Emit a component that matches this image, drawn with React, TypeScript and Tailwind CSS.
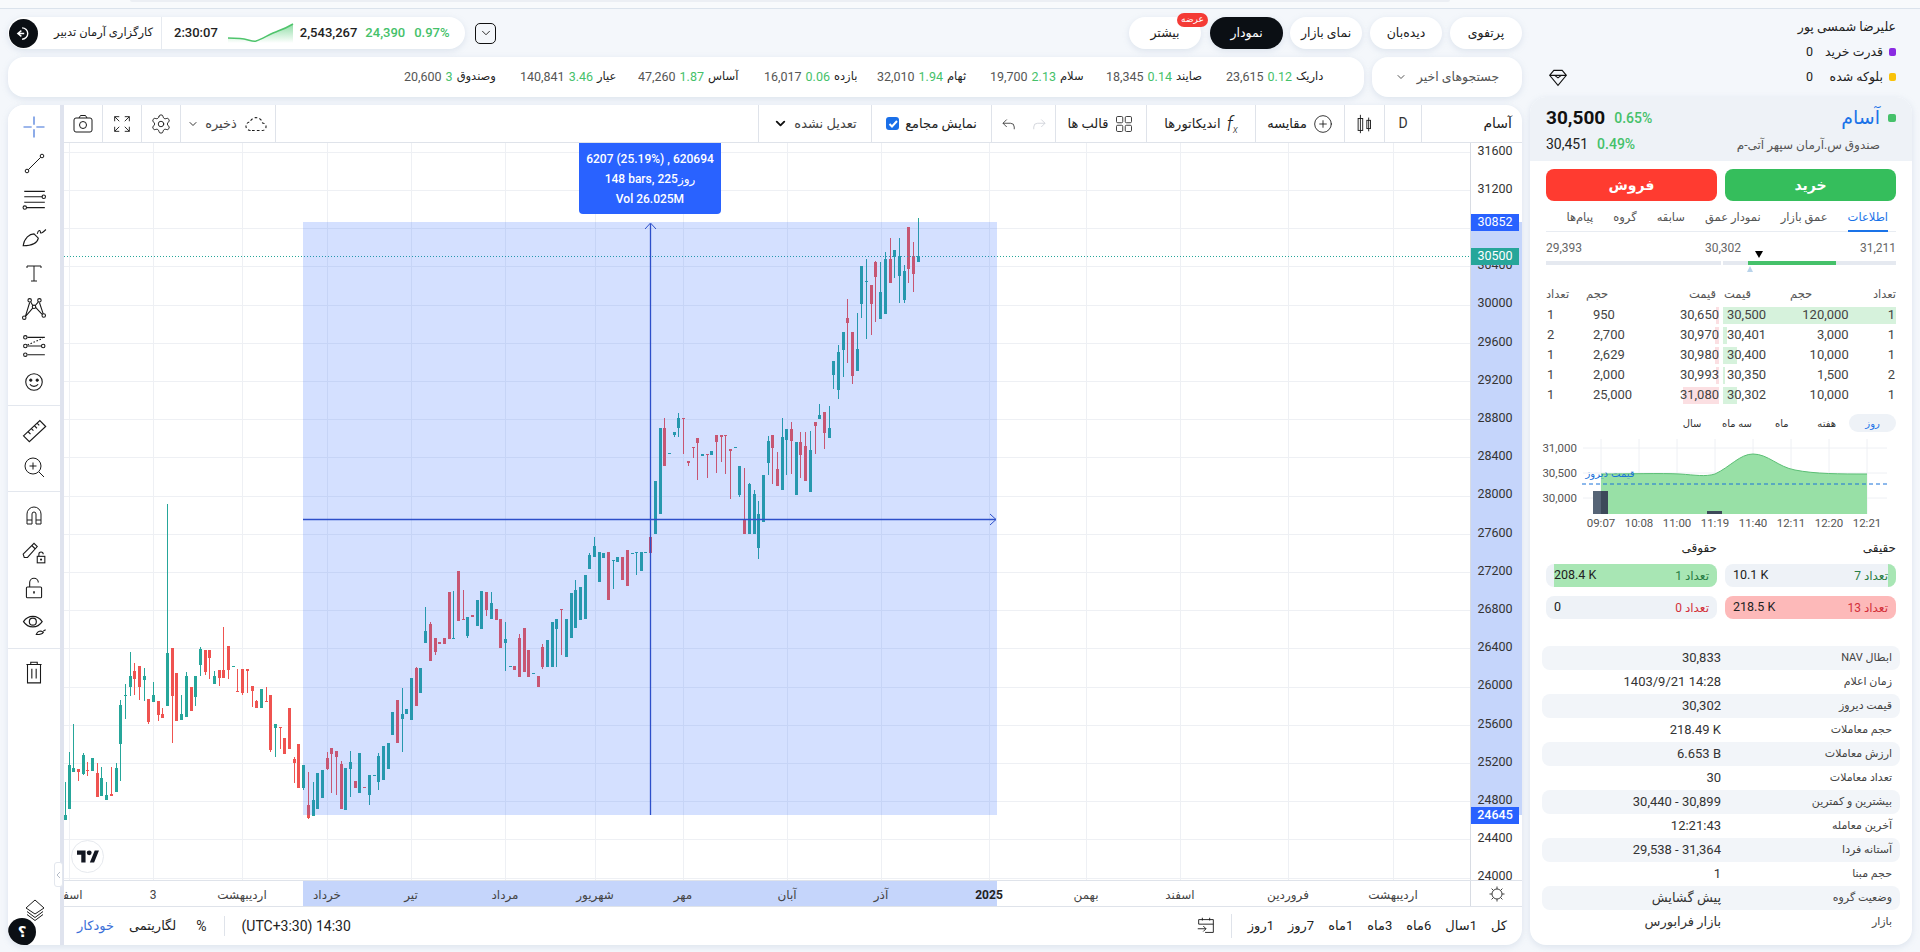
import React from "react";
import { ChevronDown, Settings, CirclePlus } from "lucide-react";

type C = [number, number, number, number, number, number];
const z12: C[] = [[45,1005,1020,905,1020,1],[58,855,987,815,987,1],[70,865,875,733,875,1],[85,868,876,868,903,0],[100,825,882,820,885,1],[112,870,873,846,888,0],[127,835,872,835,872,1],[142,880,950,848,950,0],[154,895,947,862,947,1],[169,945,960,905,960,1],[184,943,947,862,947,0],[199,865,936,850,936,1],[211,675,792,660,902,1],[226,646,648,612,716,1],[241,588,620,516,648,1],[253,573,597,550,645,0],[268,558,620,558,660,0],[283,588,600,565,662,1],[295,657,726,657,732,0],[310,645,665,606,665,1],[325,663,705,663,722,0],[337,702,714,684,714,0],[352,520,678,72,678,1],[367,504,648,504,788,0],[379,580,722,580,722,0],[394,703,720,645,720,1],[409,588,710,575,710,1],[424,620,692,620,692,0],[436,588,650,588,678,1],[451,507,556,502,588,1],[466,510,575,510,585,0],[478,510,533,510,596,0],[493,588,612,573,612,1],[508,570,594,570,618,0],[520,570,594,441,594,0],[535,498,570,498,597,0],[550,558,560,558,560,1],[562,633,636,567,636,0],[577,567,640,567,644,0],[592,568,572,568,638,0],[607,618,633,618,682,0],[619,663,684,660,684,0],[634,627,684,627,684,1],[649,663,665,621,665,0],[661,645,810,645,816,0],[676,733,744,733,831,1],[691,741,743,741,807,0],[703,774,822,774,822,0],[718,684,806,684,806,0],[733,837,849,831,909,0],[745,792,924,792,924,0],[760,855,924,855,930,1],[775,975,1014,876,1017,0],[790,960,1008,905,1008,1],[802,880,987,880,987,1],[817,870,954,870,954,1],[832,834,867,816,870,0],[844,804,822,804,939,0],[859,813,831,813,945,0],[874,852,987,843,987,0],[886,864,990,864,990,1]];
const z10: C[] = [[151,1027,1047,993,1131,1],[166,1083,1104,1083,1104,0],[178,999,1119,999,1119,1],[193,1101,1104,1101,1104,0],[208,1065,1125,1065,1155,1],[223,1065,1068,1065,1068,1],[235,1007,1086,1000,1110,1],[250,978,1080,978,1080,1],[265,969,1047,969,1047,1],[277,876,945,876,945,1],[292,840,970,840,970,0],[307,882,897,804,995,1],[319,867,882,867,882,1],[334,775,900,775,900,1],[349,745,858,740,858,0],[361,744,820,744,820,1],[376,633,669,560,669,1],[391,612,723,605,723,0],[406,654,696,654,705,0],[418,667,671,667,671,0],[433,654,672,654,672,0],[448,516,657,516,657,0],[460,653,657,513,657,1],[475,453,603,453,603,0],[490,598,600,510,600,0],[502,591,648,591,654,1],[517,586,590,586,590,0],[532,540,618,540,618,1],[544,513,627,513,627,1],[559,516,570,516,588,0],[574,549,597,516,597,1],[589,567,600,567,600,0],[601,597,684,597,684,0],[616,657,669,606,753,1],[631,738,740,738,740,1],[643,738,750,738,750,0],[658,654,771,642,771,0],[673,624,756,624,756,0],[685,690,771,690,771,0],[700,759,762,759,762,1],[715,768,801,768,801,0],[727,681,741,672,747,0],[742,660,741,660,741,1],[757,606,741,606,741,1],[769,597,627,597,741,1],[784,566,570,566,705,0],[799,597,711,597,711,1],[814,519,654,519,654,1],[826,510,624,480,624,1],[841,501,600,501,600,1],[856,465,597,465,597,1],[868,405,447,400,447,1],[883,378,412,351,412,1],[898,396,486,396,486,1],[910,400,414,400,414,1],[925,396,540,396,540,0],[940,420,423,420,507,1],[952,411,426,411,426,1],[967,411,480,411,480,0],[982,390,498,390,498,0],[997,398,401,398,401,1],[1009,396,399,396,465,1],[1024,396,453,396,453,1],[1036,397,399,397,399,1]];
const z11: C[] = [[31,411,459,411,459,0],[46,243,402,243,402,1],[61,84,342,84,342,1],[73,84,198,54,198,0],[88,159,161,159,161,1],[103,96,105,96,111,1],[115,54,84,39,111,1],[130,53,56,53,162,0],[145,183,189,183,198,0],[160,141,144,141,174,0],[172,114,129,114,240,0],[187,163,167,163,167,1],[202,162,165,162,234,0],[214,153,165,153,165,1],[229,105,126,105,219,0],[244,105,111,105,186,0],[256,105,108,105,222,0],[271,148,153,148,297,0],[286,141,143,141,143,1],[298,198,285,198,291,1],[313,357,402,204,402,0],[328,252,402,249,402,1],[343,282,402,270,402,1],[355,342,444,303,477,1],[370,225,366,225,366,1],[385,123,189,108,225,1],[397,105,144,105,252,0],[412,207,258,156,258,0],[427,111,270,54,270,1],[439,87,120,87,225,1],[454,87,123,66,222,0],[469,126,285,126,285,1],[481,126,165,96,234,0],[496,138,243,96,243,0],[511,150,276,93,276,1],[526,66,78,66,162,0],[538,45,57,12,57,1],[553,36,99,36,147,0],[568,84,114,18,114,1]];
const z8: C[] = [[580,723,765,723,807,1],[595,696,810,675,837,1],[610,636,690,636,771,1],[622,594,609,537,729,0],[637,636,768,636,792,0],[652,687,753,579,753,1],[664,438,552,438,594,1],[679,483,487,417,657,1],[694,495,552,495,645,0],[706,426,471,423,606,0],[721,516,597,426,597,1],[736,417,582,396,582,1],[751,417,489,354,489,0],[763,390,411,390,474,1],[778,408,468,354,549,1],[793,453,540,435,549,1],[805,321,447,321,489,0],[820,408,462,366,516,0],[835,408,426,294,426,1]];

const conv = (ox: number, oy: number, a: C[]) => a.map(([x, t, b, wt, wb, c]) => ({ x: Math.round(ox + x / 3) - 1, t: oy + t / 3, b: oy + b / 3, wt: oy + wt / 3, wb: oy + wb / 3, c }));
const candles = [...conv(50, 480, z12), ...conv(300, 420, z10), ...conv(640, 400, z11), ...conv(640, 120, z8)];

const priceY = (p: number) => 151.7 + (31600 - p) * 0.0955;
const prices = Array.from({ length: 20 }, (_, i) => 31600 - i * 400);
const vGrid = [69, 153, 242, 327, 411, 505, 595, 683, 787, 881, 989, 1086, 1180, 1288, 1393];
const timeLabels: [string, number, boolean?][] = [["اسفند", 68], ["3", 153], ["اردیبهشت", 242], ["خرداد", 327], ["تیر", 411], ["مرداد", 505], ["شهریور", 595], ["مهر", 683], ["آبان", 787], ["آذر", 881], ["2025", 989, true], ["بهمن", 1086], ["اسفند", 1180], ["فروردین", 1288], ["اردیبهشت", 1393]];

const FONT = "[font-family:Roboto,'DejaVu_Sans',sans-serif]";

const Ico = ({ children, s = 24, className = "" }: { children: React.ReactNode; s?: number; className?: string }) => (
  <svg width={s} height={s} viewBox="0 0 24 24" fill="none" stroke="#1a1a1a" strokeWidth="1" className={className}>{children}</svg>
);

function ToolIcon({ n }: { n: number }) {
  switch (n) {
    case 0: return <Ico s={28}><path d="M12 3v7M12 14v7M3 12h7M14 12h7" stroke="#3b6fd8" /></Ico>;
    case 1: return <Ico><circle cx="5" cy="19" r="1.8" /><circle cx="20" cy="4" r="1.8" /><path d="M6.3 17.7 18.7 5.3" /></Ico>;
    case 2: return <Ico s={26}><path d="M3 4h19M3 9h17M3 14h19M5 19h17" /><circle cx="21" cy="9" r="1.6" /><circle cx="3.500" cy="19" r="1.6" /></Ico>;
    case 3: return <Ico s={26}><path d="M2 21C3 14 8 10 12 10l4 4C15 19 9 21 2 21ZM15 10c1-4 3-4 3-1 1 1 3-1 5-3" /></Ico>;
    case 4: return <Ico><path d="M5 5h14M12 5v15M9 20h6M5 5v2M19 5v2" /></Ico>;
    case 5: return <Ico s={26}><circle cx="8" cy="4" r="1.6" /><circle cx="17" cy="4" r="1.6" /><circle cx="12" cy="10" r="1.6" /><circle cx="3" cy="20" r="1.6" /><circle cx="21" cy="18" r="1.6" /><path d="m8 6-4 13M9 5.500l2 3.500M17 6l3.500 10.500M16 5.500l-3 3.500M4 19l7-8M13.500 10.500l6 6.500" /></Ico>;
    case 6: return <Ico s={26}><path d="M6 4h16M6 12h13M6 20h16" /><circle cx="4" cy="4" r="1.6" /><circle cx="4" cy="12" r="1.6" /><circle cx="20.500" cy="12" r="1.6" /><circle cx="4" cy="20" r="1.6" /><path d="M6 11l14-6" strokeDasharray="1.500 1.500" /></Ico>;
    case 7: return <Ico s={22}><circle cx="12" cy="12" r="9" strokeWidth="1.200" /><circle cx="8.500" cy="10" r="1.300" fill="#1a1a1a" /><circle cx="15.500" cy="10" r="1.300" fill="#1a1a1a" /><path d="M7.500 14.500c2 3 7 3 9 0" strokeWidth="1.200" /></Ico>;
    case 8: return <Ico s={28}><path d="M3 17 17 4l5 5L8 22ZM7 13.500l2 2M10 11l1.500 1.500M12.500 8.500l2 2M15 6.500l1.500 1.500" /></Ico>;
    case 9: return <Ico s={24}><circle cx="11" cy="11" r="8" /><path d="M11 7.500v7M7.500 11h7M17 17l5 5" /></Ico>;
    case 10: return <Ico s={24}><path d="M5 21V11a7 7 0 0 1 14 0v10h-5V11a2 2 0 0 0-4 0v10ZM5 17h5M14 17h5" /></Ico>;
    case 11: return <Ico s={26}><path d="M2 14 12 4l3 3L6 17H3ZM10 6l3 3" /><rect x="15" y="16" width="7" height="6" /><path d="M16.500 16v-2a2 2 0 0 1 4 0" /><circle cx="18.500" cy="19" r=".5" /></Ico>;
    case 12: return <Ico s={26}><rect x="5" y="11" width="14" height="10" rx="1" /><path d="M8 11V7a4 4 0 0 1 8 0" /><path d="M12 15v2" strokeWidth="1.500" /></Ico>;
    case 13: return <Ico s={28}><path d="M3 10c4-6 12-6 16 0-4 6-12 6-16 0Z" /><circle cx="11" cy="10" r="3" /><path d="M14 21c1-3 3-3 4-3l2 1c-1 2-3 2-6 2ZM20 18l2-1" /></Ico>;
    default: return <Ico s={26}><path d="M5 5h14M9 5V3h6v2M6 5v17h12V5M10 9v9M14 9v9" /></Ico>;
  }
}

function ToolBar() {
  const btn = (n: number) => (
    <div key={n} className="h-[36.400px] flex items-center justify-center"><ToolIcon n={n} /></div>
  );
  return (
    <div className="w-[52px] shrink-0 flex flex-col bg-white relative">
      <div className="pt-[4px] h-[301px] border-b border-[#e3e7ee]">{[0, 1, 2, 3, 4, 5, 6, 7].map(btn)}</div>
      <div className="h-[86px] border-b border-[#e3e7ee] pt-[6px]">{[8, 9].map(btn)}</div>
      <div className="h-[157px] border-b border-[#e3e7ee] pt-[5px]">{[10, 11, 12, 13].map(btn)}</div>
      <div className="pt-[5px]">{btn(14)}</div>
      <div className="flex-1" />
      <div className="flex justify-center pb-[24px] pl-[1px]">
        <Ico s={24}><path d="M12 3 3 11l9 6 9-6ZM4 14.500l8 6 8-6M4 17.500l8 6 8-6" /></Ico>
      </div>
      <div className="absolute left-0 bottom-[-1px] w-[28px] h-[28px] rounded-full bg-[#0b0f14] text-white text-[15px] font-bold flex items-center justify-center">؟</div>
    </div>
  );
}

function HCell({ className = "", children }: { className?: string; children: React.ReactNode }) {
  return <div className={`h-full flex items-center justify-center gap-[6px] border-l border-[#dfe3ea] ${className}`}>{children}</div>;
}

function ChartHeader() {
  return (
    <div className="h-[38px] shrink-0 flex border-b border-[#dfe3ea] text-[13px] text-[#222]">
      <div className="w-[38px] h-full flex items-center justify-center">
        <Ico s={24}><rect x="3" y="6" width="18" height="14" rx="2" /><path d="M8 6l1.500-2.500h5L16 6" /><circle cx="12" cy="13" r="3.500" /></Ico>
      </div>
      <HCell className="w-[39px]"><Ico s={22}><path d="M4 9V4h5M4 4l5 5M15 4h5v5M20 4l-5 5M4 15v5h5M4 20l5-5M20 15v5h-5M20 20l-5-5" /></Ico></HCell>
      <HCell className="w-[39px]"><Settings size={22} strokeWidth={1} color="#1a1a1a" /></HCell>
      <HCell className="w-[96px] border-r">
        <ChevronDown size={12} color="#333" />
        <span dir="rtl" className="text-[13px] text-[#444]">ذخیره</span>
        <Ico s={26}><path d="M7 18a4 4 0 0 1-.500-8 6 6 0 0 1 11.500 1 3.500 3.500 0 0 1-.500 7Z" strokeDasharray="2.500 2" /></Ico>
      </HCell>
      <div className="flex-1" />
      <HCell className="w-[113px]"><ChevronDown size={15} strokeWidth={3} color="#111" /><span dir="rtl" className="text-[#444]">تعدیل نشده</span></HCell>
      <HCell className="w-[120px]">
        <span className="w-[13px] h-[13px] rounded-[3px] bg-[#1a6fe8] flex items-center justify-center">
          <svg width="10" height="10" viewBox="0 0 10 10" fill="none" stroke="#fff" strokeWidth="2"><path d="m1.500 5 2.500 2.500 5-5.500" /></svg>
        </span>
        <span dir="rtl" className="text-[#222]">نمایش مجامع</span>
      </HCell>
      <HCell className="w-[64px] gap-[12px]">
        <Ico s={18}><path d="M9 6 4 11l5 5M4 11h10a5 5 0 0 1 5 5v3" /></Ico>
        <Ico s={18}><path d="m15 6 5 5-5 5M20 11H10a5 5 0 0 0-5 5v3" stroke="#c5c9d1" /></Ico>
      </HCell>
      <HCell className="w-[91px]"><span dir="rtl">قالب ها</span>
        <Ico s={20}><rect x="3" y="3" width="7.500" height="7.500" rx="1.500" /><rect x="13.500" y="3" width="7.500" height="7.500" rx="1.500" /><rect x="3" y="13.500" width="7.500" height="7.500" rx="1.500" /><rect x="13.500" y="13.500" width="7.500" height="7.500" rx="1.500" /></Ico>
      </HCell>
      <HCell className="w-[109px]"><span dir="rtl">اندیکاتورها</span>
        <span className="italic font-light text-[20px] leading-none">f<sub className="text-[10px]">x</sub></span>
      </HCell>
      <HCell className="w-[89px]"><span dir="rtl">مقایسه</span><CirclePlus size={20} strokeWidth={1} color="#111" /></HCell>
      <HCell className="w-[40px]">
        <Ico s={22}><path d="M7 2v20M16 5v15" /><rect x="4.500" y="6" width="5" height="13" /><rect x="14" y="8" width="4" height="9" /></Ico>
      </HCell>
      <HCell className="w-[37px] text-[14px] text-[#333]">D</HCell>
      <div className="w-[101px] h-full flex items-center justify-end pr-[10px] border-l border-[#dfe3ea]">
        <span dir="rtl" className="text-[14px]">آسام</span>
      </div>
    </div>
  );
}

function ChartSvg() {
  return (
    <svg width="1406" height="737" viewBox="64 143 1406 737" className="absolute left-0 top-0">
      {prices.map((p) => <line key={p} x1="64" x2="1470" y1={Math.round(priceY(p)) + 0.5} y2={Math.round(priceY(p)) + 0.5} stroke="#eef0f4" />)}
      {vGrid.map((x) => <line key={x} x1={x + 0.5} x2={x + 0.5} y1="143" y2="880" stroke="#eef0f4" />)}
      <g shapeRendering="crispEdges">
        {candles.map((c, i) => (
          <g key={i} fill={c.c ? "#26a69a" : "#ef5350"}>
            <rect x={c.x + 1} y={c.wt} width="1" height={c.wb - c.wt} />
            <rect x={c.x} y={c.t} width="3" height={Math.max(c.b - c.t, 1)} />
          </g>
        ))}
      </g>
      <line x1="64" x2="1470" y1="256.500" y2="256.500" stroke="#26a69a" strokeDasharray="1 2" />
      <rect x="303" y="222" width="694" height="593" fill="#2962ff" fillOpacity="0.2" />
      <line x1="303" x2="996" y1="519.500" y2="519.500" stroke="#2d4fc9" strokeWidth="1.300" />
      <line x1="650.500" x2="650.500" y1="224" y2="815" stroke="#2d4fc9" strokeWidth="1.300" />
      <path d="M990 514l6 5.500-6 5.500" fill="none" stroke="#2d4fc9" />
      <path d="M645 229l5.500-6 5.500 6" fill="none" stroke="#2d4fc9" />
    </svg>
  );
}

function TvLogo() {
  return (
    <div className="absolute left-[7px] top-[697px] w-[33px] h-[33px] rounded-full bg-white border border-[#e6e9ee] flex items-center justify-center">
      <svg width="22" height="13" viewBox="0 0 36 20" fill="#131722"><path d="M14 20H7V7H0V0h14v20ZM28 20h-7L29 0h7l-8 20Z" /><circle cx="20" cy="4" r="4" /></svg>
    </div>
  );
}

function ChartArea() {
  return (
    <div className="flex-1 flex min-h-0">
      <div className="w-[1406px] relative overflow-hidden">
        <ChartSvg />
        <div className="absolute left-[515px] top-0 w-[142px] h-[71px] bg-[#2962ff] rounded-b-[4px] text-white text-[12px] font-medium flex flex-col items-center justify-center leading-[20px]">
          <div>6207 (25.19%) , 620694</div>
          <div>148 bars, 225روز</div>
          <div>Vol 26.025M</div>
        </div>
        <TvLogo />
      </div>
      <div className="w-[52px] relative overflow-hidden border-l border-[#d8dce3] text-[12.500px] text-[#333]">
        <div className="absolute left-0 right-0 top-[79px] h-[593px] bg-[#c5d5fb]" />
        <div className="relative -mt-[11px]">
          {prices.map((p) => <div key={p} className="h-[38.200px] flex items-center justify-center pr-[3px]">{p}</div>)}
        </div>
        <div className="absolute left-0 top-[71px] w-[48px] h-[17px] bg-[#2962ff] text-white flex items-center justify-center">30852</div>
        <div className="absolute left-0 top-[105px] w-[48px] h-[17px] bg-[#26a69a] text-white flex items-center justify-center">30500</div>
        <div className="absolute left-0 top-[664px] w-[48px] h-[17px] bg-[#2962ff] text-white font-medium flex items-center justify-center">24645</div>
      </div>
    </div>
  );
}

function TimeAxis() {
  return (
    <div className="h-[27px] shrink-0 flex border-t border-b border-[#dfe3ea] text-[12px] text-[#444]">
      <div className="w-[1406px] relative overflow-hidden">
        <div className="absolute left-[239px] w-[694px] top-0 bottom-0 bg-[#c5d5fb]" />
        {timeLabels.map(([t, x, b], i) => (
          <span key={i} dir="rtl" className={`absolute top-[5px] -translate-x-1/2 whitespace-nowrap ${b ? "font-bold text-[#222]" : ""}`} style={{ left: x - 64 }}>{t}</span>
        ))}
      </div>
      <div className="w-[52px] flex items-center justify-center border-l border-[#d8dce3]">
        <Ico s={20}><circle cx="12" cy="12" r="6" /><path d="M12 3v3M12 18v3M3 12h3M18 12h3M5.500 5.500l2 2M16.500 16.500l2 2M18.500 5.500l-2 2M5.500 18.500l2-2" /></Ico>
      </div>
    </div>
  );
}

function BottomBar() {
  return (
    <div className="h-[38px] shrink-0 flex items-center text-[13px] text-[#222] pl-[13px] pr-[15px]">
      <span dir="rtl" className="text-[#3b6fd8]">خودکار</span>
      <span dir="rtl" className="ml-[15px]">لگاریتمی</span>
      <span className="ml-[20px] text-[14px]">%</span>
      <span className="ml-[17px] h-[20px] w-px bg-[#dfe3ea]" />
      <span className="ml-[17px] text-[14px]">(UTC+3:30) 14:30</span>
      <div className="flex-1" />
      <Ico s={22}><path d="M4 10V5h16v14h-9M4 10h16M8 3v3M16 3v3M3 15h9M9 12l3 3-3 3" /></Ico>
      <span className="ml-[14px] mr-[16px] h-[24px] w-px bg-[#dfe3ea]" />
      <div className="flex items-center gap-[14px]" dir="rtl">
        {["کل", "1سال", "6ماه", "3ماه", "1ماه", "7روز", "1روز"].map((t) => <span key={t}>{t}</span>)}
      </div>
    </div>
  );
}

function Pill({ children, active, className = "" }: { children: React.ReactNode; active?: boolean; className?: string }) {
  return (
    <div dir="rtl" className={`w-[72px] h-[32px] rounded-full flex items-center justify-center text-[12.500px] relative shadow-[0_2px_6px_rgba(150,170,200,0.25)] ${active ? "bg-[#0b0f14] text-white" : "bg-white text-[#222]"} ${className}`}>{children}</div>
  );
}

function Ticker({ name, ch, price, className = "" }: { name: string; ch: string; price: string; className?: string }) {
  return (
    <div className={`flex items-center gap-[4px] ${className}`}>
      <span className="text-[#555]">{price}</span>
      <span className="text-[#45c16a]">{ch}</span>
      <span dir="rtl" className="text-[#222] text-[11.500px]">{name}</span>
    </div>
  );
}

function TopRow() {
  return (
    <div className="h-[32px] flex items-center">
      <div className="w-[457px] h-[32px] rounded-full bg-white shadow-[0_2px_6px_rgba(150,170,200,0.25)] flex items-center text-[13px]">
        <div className="ml-[1px] w-[29px] h-[29px] rounded-full bg-[#0b0f14] flex items-center justify-center">
          <svg width="17" height="17" viewBox="0 0 24 24" fill="none" stroke="#fff" strokeWidth="2"><path d="M10 4a8 8 0 1 1 0 16M4 12h9M9 8l-5 4 5 4" /></svg>
        </div>
        <span dir="rtl" className="ml-[15px] w-[101px] whitespace-nowrap text-[11.500px] text-[#222] text-center">کارگزاری آرمان تدبیر</span>
        <span className="ml-[7px] h-full w-px bg-[#e6eaf0]" />
        <span className="ml-[12px] text-[#222] font-medium">2:30:07</span>
        <svg width="66" height="20" viewBox="0 0 66 20" className="ml-[10px]">
          <defs><linearGradient id="sg" x1="0" y1="0" x2="0" y2="1"><stop offset="0" stopColor="#5fce7f" stopOpacity="0.700" /><stop offset="1" stopColor="#5fce7f" stopOpacity="0" /></linearGradient></defs>
          <path d="M0 15 12 15.500 C20 16 24 19 28 18 C34 16 42 11 50 8 C56 6 60 4 65 1 V20 H0Z" fill="url(#sg)" />
          <path d="M0 15 12 15.500 C20 16 24 19 28 18 C34 16 42 11 50 8 C56 6 60 4 65 1" fill="none" stroke="#4fc46c" strokeWidth="1.500" />
        </svg>
        <span className="ml-[6px] text-[#222] font-medium">2,543,267</span>
        <span className="ml-[8px] text-[#45c16a] font-medium">24,390</span>
        <span className="ml-[9px] text-[#45c16a] font-medium">0.97%</span>
      </div>
      <div className="ml-[10px] w-[21px] h-[21px] rounded-[5px] border-[1.500px] border-[#111] flex items-center justify-center">
        <ChevronDown size={14} strokeWidth={1.500} color="#111" />
      </div>
      <div className="flex-1" />
      <Pill className="mr-[9px] w-[71px]">
        بیشتر
        <span className="absolute left-[48px] -top-[4px] w-[31px] h-[14px] rounded-full bg-[#f43b36] text-white text-[9px] flex items-center justify-center">عرضه</span>
      </Pill>
      <Pill active className="mr-[7px] w-[73px]">نمودار</Pill>
      <Pill className="mr-[8px]">نمای بازار</Pill>
      <Pill className="mr-[8px]">دیده‌بان</Pill>
      <Pill>پرتفوی</Pill>
    </div>
  );
}

function TickerRow() {
  return (
    <div className="h-[40px] mt-[8px] flex gap-[8px]">
      <div className="flex-1 bg-white rounded-[16px] shadow-[0_2px_6px_rgba(150,170,200,0.25)] flex items-center pl-[396px] text-[12.500px]">
        <Ticker name="وصندوق" ch="3" price="20,600" className="w-[116px]" />
        <Ticker name="عیار" ch="3.46" price="140,841" className="w-[118px]" />
        <Ticker name="آساس" ch="1.87" price="47,260" className="w-[126px]" />
        <Ticker name="بازده" ch="0.06" price="16,017" className="w-[113px]" />
        <Ticker name="ثهام" ch="1.94" price="32,010" className="w-[113px]" />
        <Ticker name="سلام" ch="2.13" price="19,700" className="w-[116px]" />
        <Ticker name="صایند" ch="0.14" price="18,345" className="w-[120px]" />
        <Ticker name="داریک" ch="0.12" price="23,615" />
      </div>
      <div className="w-[150px] bg-white rounded-[16px] shadow-[0_2px_6px_rgba(150,170,200,0.25)] flex items-center justify-center gap-[10px]">
        <ChevronDown size={12} color="#555" />
        <span dir="rtl" className="text-[12.500px] text-[#555] whitespace-nowrap">جستجوهای اخیر</span>
      </div>
    </div>
  );
}

function MainCard() {
  return (
    <div className="mt-[8px] h-[840px] bg-white rounded-[16px] overflow-hidden flex shadow-[0_2px_6px_rgba(150,170,200,0.25)] relative">
      <ToolBar />
      <div className="w-[4px] shrink-0 bg-[#dfe3ee]" />
      <div className="flex-1 flex flex-col min-w-0">
        <ChartHeader />
        <ChartArea />
        <TimeAxis />
        <BottomBar />
      </div>
      <div className="absolute left-[46px] top-[757px] w-[9px] h-[25px] rounded-[3px] bg-white border border-[#e3e7ee] flex items-center justify-center">
        <svg width="5" height="8" viewBox="0 0 5 8" fill="none" stroke="#b5bcc8"><path d="M4 1 1 4l3 3" /></svg>
      </div>
    </div>
  );
}

const buyRows = [["1", "120,000", "30,500", "w-[173px]"], ["1", "3,000", "30,401", "w-[4px]"], ["1", "10,000", "30,400", "w-[14px]"], ["2", "1,500", "30,350", "w-[2px]"], ["1", "10,000", "30,302", "w-[14px]"]];
const sellRows = [["1", "950", "30,650", "w-[3px]"], ["2", "2,700", "30,970", "w-[4px]"], ["1", "2,629", "30,980", "w-[4px]"], ["1", "2,000", "30,993", "w-[3px]"], ["1", "25,000", "31,080", "w-[36px]"]];

function OrderBook() {
  return (
    <div className="mt-[21px] text-[13px] text-[#444]">
      <div dir="rtl" className="h-[17px] flex text-[11.500px] text-[#555] items-center">
        <span className="w-[45px]">تعداد</span>
        <span className="w-[77px] text-left pl-[16px]">حجم</span>
        <span className="w-[50px] text-left">قیمت</span>
        <span className="w-[8px]" />
        <span className="w-[44px]">قیمت</span>
        <span className="w-[86px] text-left">حجم</span>
        <span className="flex-1 text-left">تعداد</span>
      </div>
      <div className="mt-[2px] flex flex-col">
        {buyRows.map((b, i) => {
          const s = sellRows[i];
          return (
            <div key={i} className="h-[20px] flex items-center">
              <div className="w-[173px] h-[17px] relative flex items-center">
                <div className={`absolute right-0 top-0 bottom-0 bg-[#fbdfe2] ${s[3]}`} />
                <span className="relative w-[47px] pl-[1px]">{s[0]}</span>
                <span className="relative flex-1">{s[1]}</span>
                <span className="relative">{s[2]}</span>
              </div>
              <div className="w-[4px]" />
              <div className="flex-1 h-[17px] relative flex items-center">
                <div className={`absolute left-0 top-0 bottom-0 bg-[#d6f2dc] ${b[3]}`} />
                <span className="relative pl-[4px]">{b[2]}</span>
                <span className="relative flex-1 text-right pr-[39px]">{b[1]}</span>
                <span className="relative pr-[1px]">{b[0]}</span>
              </div>
            </div>
          );
        })}
      </div>
    </div>
  );
}

function MiniChart() {
  const xs = [1601, 1639, 1677, 1715, 1753, 1791, 1829, 1867];
  const lbl = ["09:07", "10:08", "11:00", "11:19", "11:40", "12:11", "12:20", "12:21"];
  const curve = "M1601 475 C1630 475 1660 474 1680 475 C1695 476 1705 478 1715 475 C1730 468 1740 455 1753 455 C1768 455 1778 468 1795 471 C1815 475 1840 475 1867 475";
  return (
    <svg width="350" height="98" viewBox="1546 436 350 98" className="mt-[3px] block overflow-visible" fontFamily="Roboto" fontSize="11.500">
      {[449, 474, 499].map((y) => <line key={y} x1="1583" x2="1887" y1={y} y2={y} stroke="#eef0f4" />)}
      {xs.map((x) => <line key={x} x1={x} x2={x} y1="440" y2="515" stroke="#eef0f4" />)}
      <path d={curve + " V515 H1601Z"} fill="#98e0a6" />
      <path d={curve} fill="none" stroke="#5bbf75" />
      <rect x="1593" y="492" width="8" height="23" fill="#566476" />
      <rect x="1601" y="492" width="7" height="23" fill="#3d4a5a" />
      <rect x="1707" y="512" width="15" height="3" fill="#3d4a5a" />
      <line x1="1582" x2="1887" y1="485" y2="485" stroke="#1a73d9" strokeDasharray="4 3" />
      {[[449, "31,000"], [474, "30,500"], [499, "30,000"]].map(([y, t]) => <text key={t} x="1577" y={Number(y) + 4} textAnchor="end" fill="#555">{t}</text>)}
      <text x="1610" y="478" textAnchor="middle" fill="#1a73d9" fontSize="10" fontFamily="'DejaVu Sans'">قیمت دیروز</text>
      {xs.map((x, i) => <text key={x} x={x} y="528" textAnchor="middle" fill="#555">{lbl[i]}</text>)}
    </svg>
  );
}

function Flow({ left, right, cls, bar, red }: { left: string; right: string; cls: string; bar?: React.ReactNode; red?: boolean }) {
  return (
    <div className={`flex-1 h-[23px] rounded-[8px] relative overflow-hidden flex items-center justify-between px-[8px] text-[12.500px] ${cls}`}>
      {bar}
      <span className="relative text-[#222]">{left}</span>
      <span dir="rtl" className={`relative text-[12px] ${red ? "text-[#d3303a]" : "text-[#2a7d44]"}`}>{right}</span>
    </div>
  );
}

const infoRows: [string, string][] = [["ابطال NAV", "30,833"], ["زمان اعلام", "1403/9/21 14:28"], ["قیمت دیروز", "30,302"], ["حجم معاملات", "218.49 K"], ["ارزش معاملات", "6.653 B"], ["تعداد معاملات", "30"], ["بیشترین و کمترین", "30,440 - 30,899"], ["آخرین معامله", "12:21:43"], ["آستانه فردا", "29,538 - 31,364"], ["حجم مبنا", "1"], ["وضعیت گروه", "پیش گشایش"], ["بازار", "بازار فرابورس"]];

function RightPanel() {
  return (
    <div className="w-[382px] shrink-0 flex flex-col ml-[8px] pt-[8px]">
      <div className="h-[80px] relative text-[12.500px] text-[#222]">
        <div className="absolute left-[18px] top-[50px]">
          <svg width="20" height="20" viewBox="0 0 24 24" fill="none" stroke="#111" strokeWidth="1.300"><path d="M7 4h10l5 6-10 12L2 10ZM2 10h20M8 10l4 3 4-3" /></svg>
        </div>
        <div className="flex flex-col items-end pr-[16px]">
          <div dir="rtl" className="h-[20px] flex items-center font-medium">علیرضا شمسی پور</div>
          <div className="mt-[5px] h-[20px] w-[90px] flex items-center justify-between"><span>0</span><span className="flex items-center gap-[6px]"><span dir="rtl">قدرت خرید</span><span className="w-[7px] h-[8px] rounded-[2px] bg-[#8a2be2]" /></span></div>
          <div className="mt-[5px] h-[20px] w-[90px] flex items-center justify-between"><span>0</span><span className="flex items-center gap-[6px]"><span dir="rtl">بلوکه شده</span><span className="w-[7px] h-[8px] rounded-[2px] bg-[#f9c20a]" /></span></div>
        </div>
      </div>
      <div className="h-[848px] bg-white rounded-[16px] overflow-hidden shadow-[0_2px_6px_rgba(150,170,200,0.25)] flex flex-col">
        <div className="h-[64px] shrink-0 bg-[#eef2f7] px-[16px] flex justify-between pt-[8px]">
          <div>
            <div className="flex items-center gap-[9px] h-[26px]">
              <span className="text-[19px] font-bold text-[#111]">30,500</span>
              <span className="text-[14px] font-medium text-[#45c16a]">0.65%</span>
            </div>
            <div className="flex items-center gap-[9px] h-[22px] mt-[2px]">
              <span className="text-[14px] text-[#222]">30,451</span>
              <span className="text-[14px] font-medium text-[#45c16a]">0.49%</span>
            </div>
          </div>
          <div className="flex flex-col items-end">
            <div className="flex items-center gap-[8px] h-[26px]">
              <span dir="rtl" className="text-[19px] font-medium text-[#1a73e8]">آسام</span>
              <span className="w-[8px] h-[8px] rounded-[2px] bg-[#45c16a]" />
            </div>
            <span dir="rtl" className="text-[12px] text-[#555] mr-[16px] mt-[5px]">صندوق س.آرمان سپهر آتی-م</span>
          </div>
        </div>
        <div className="px-[16px] flex-1 flex flex-col">
          <div className="mt-[8px] h-[32px] shrink-0 flex gap-[8px] text-white text-[14px] font-bold">
            <div dir="rtl" className="flex-1 rounded-[8px] bg-[#ff3b30] flex items-center justify-center">فروش</div>
            <div dir="rtl" className="flex-1 rounded-[8px] bg-[#35be5c] flex items-center justify-center">خرید</div>
          </div>
          <div className="h-[31px] shrink-0 flex border-b border-[#e8ecf2] text-[11.500px] text-[#555] justify-end gap-[20px] pr-[8px]">
            {["پیام‌ها", "گروه", "سابقه", "نمودار عمق", "عمق بازار"].map((t) => <span key={t} dir="rtl" className="pt-[8px] whitespace-nowrap">{t}</span>)}
            <span dir="rtl" className="pt-[8px] text-[#1a73e8] border-b-2 border-[#1a73e8] h-[31px] whitespace-nowrap">اطلاعات</span>
          </div>
          <div className="mt-[7px] h-[15px] relative text-[12px] text-[#666] flex justify-between">
            <span>29,393</span><span className="absolute left-[159px]">30,302</span><span>31,211</span>
          </div>
          <div className="mt-[7px] h-[4px] flex gap-[2px] relative">
            <div className="w-[175px] bg-[#e5e9f0]" />
            <div className="flex-1 bg-[#e5e9f0]" />
            <div className="absolute left-[202px] w-[88px] top-0 bottom-0 bg-[#45c16a]" />
            <span className="absolute left-[209px] -top-[10px] w-0 h-0 border-l-[4px] border-r-[4px] border-t-[7px] border-l-transparent border-r-transparent border-t-black" />
            <span className="absolute left-[201px] top-[5px] w-0 h-0 border-l-[3px] border-r-[3px] border-b-[6px] border-l-transparent border-r-transparent border-b-[#b9d3ea]" />
          </div>
          <OrderBook />
          <div className="mt-[9px] h-[18px] flex text-[10px] text-[#333]">
            <div className="w-[124px]" />
            {["سال", "سه ماه", "ماه", "هفته"].map((t) => <span key={t} dir="rtl" className="w-[45px] flex items-center justify-center">{t}</span>)}
            <span dir="rtl" className="w-[47px] rounded-full bg-[#eef2f7] text-[#1a73e8] flex items-center justify-center">روز</span>
          </div>
          <MiniChart />
          <div dir="rtl" className="mt-[7px] h-[16px] flex text-[12px] text-[#222] items-center gap-[8px]">
            <span className="flex-1">حقیقی</span><span className="flex-1">حقوقی</span>
          </div>
          <div className="mt-[8px] flex gap-[8px]">
            <Flow left="208.4 K" right="تعداد 1" cls="bg-[#eef2f7]" bar={<div className="absolute left-[8px] right-0 top-0 bottom-0 bg-[#a8e6b4]" />} />
            <Flow left="10.1 K" right="تعداد 7" cls="bg-[#eef2f7]" bar={<div className="absolute right-0 w-[8px] top-0 bottom-0 bg-[#a8e6b4]" />} />
          </div>
          <div className="mt-[9px] flex gap-[8px]">
            <Flow left="0" right="تعداد 0" cls="bg-[#eef2f7]" red />
            <Flow left="218.5 K" right="تعداد 13" cls="bg-[#fdb9b9]" red />
          </div>
          <div className="mt-[27px] -mx-[4px] flex flex-col text-[13px] text-[#333]">
            {infoRows.map(([l, v], i) => (
              <div key={l} className={`h-[24px] rounded-[8px] flex items-center ${i % 2 === 0 ? "bg-[#f2f5f9]" : ""}`}>
                <span dir="ltr" className="w-[179px] shrink-0 text-right whitespace-nowrap">{v}</span>
                <span dir="rtl" className="flex-1 pr-[8px] text-[11px] text-[#444]">{l}</span>
              </div>
            ))}
          </div>
        </div>
      </div>
    </div>
  );
}

export default function App() {
  return (
    <div className={`w-[1920px] h-[952px] overflow-hidden bg-[#f4f7fb] flex flex-col ${FONT}`}>
      <div className="h-[9px] shrink-0 bg-[#f8fafc] border-b border-[#dbe3ec] px-[130px]">
        <div className="ml-0 w-[1320px] h-[2px] rounded-b-[6px] bg-[#eceff4]" />
      </div>
      <div className="flex-1 flex pl-[8px] min-h-0">
        <div className="w-[1514px] shrink-0 pt-[8px] flex flex-col">
          <TopRow />
          <TickerRow />
          <MainCard />
        </div>
        <RightPanel />
      </div>
    </div>
  );
}
